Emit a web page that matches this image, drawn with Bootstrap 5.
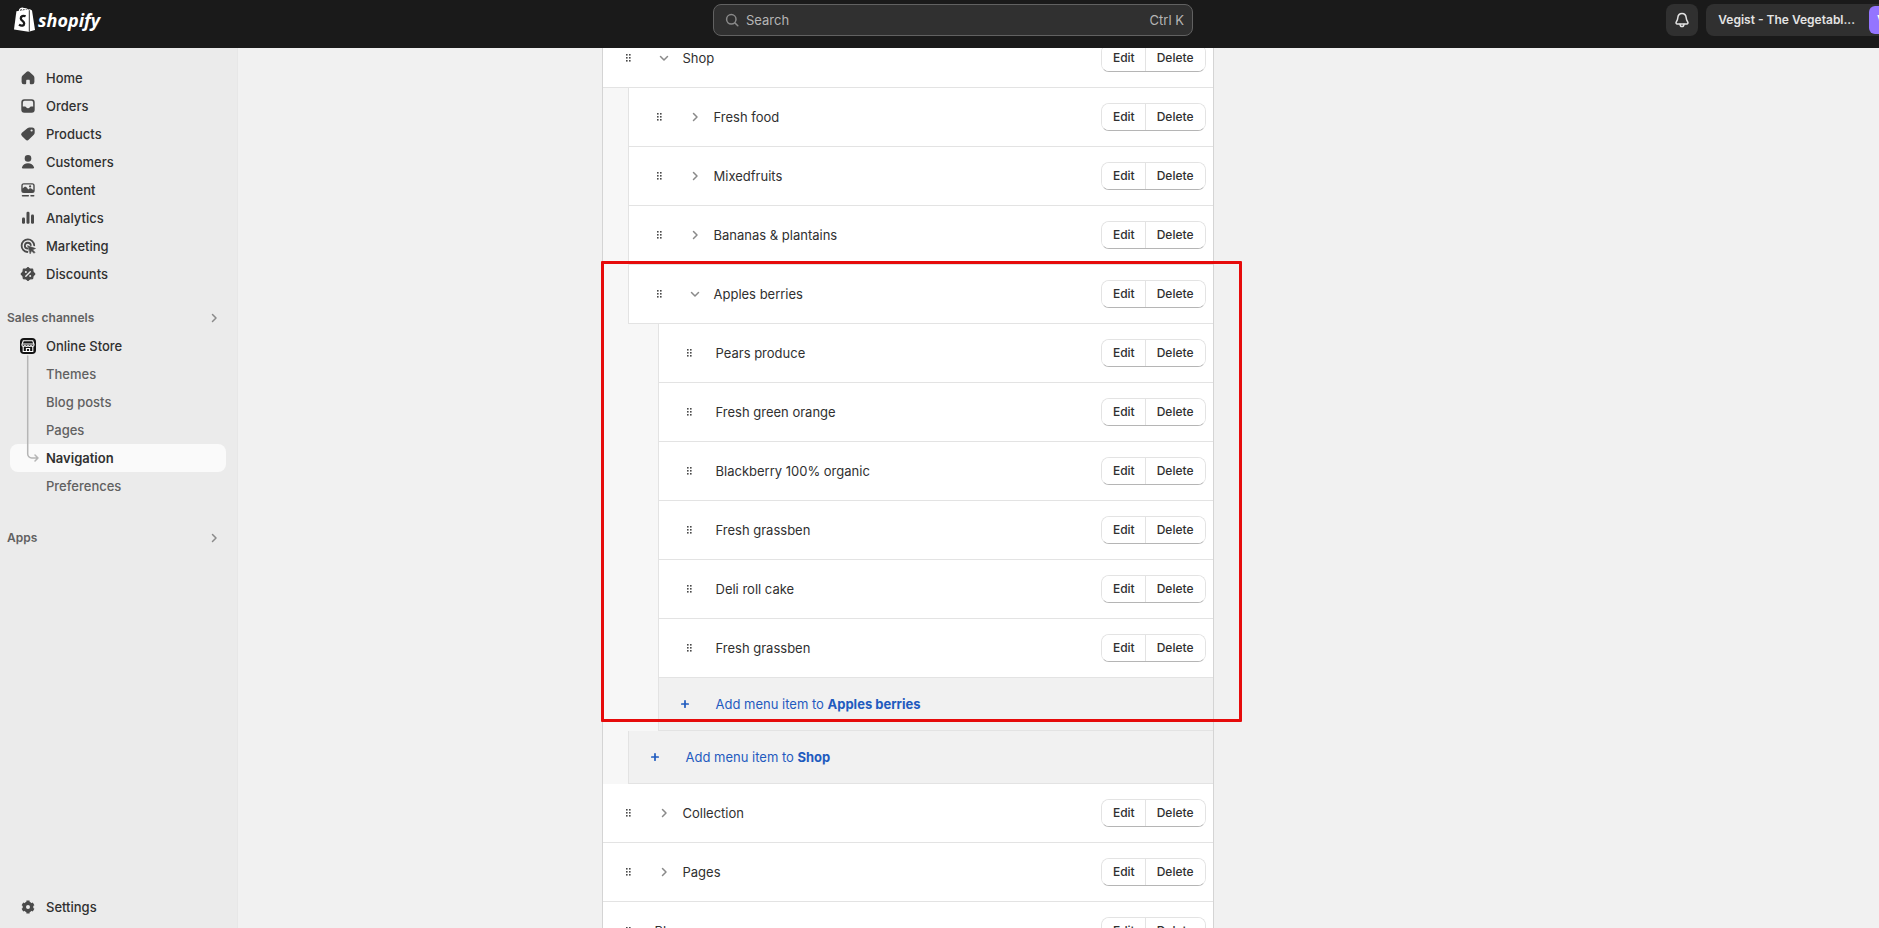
<!DOCTYPE html>
<html lang="en">
<head>
<meta charset="utf-8">
<meta name="viewport" content="width=device-width, initial-scale=1">
<title>Navigation</title>
<link href="https://cdn.jsdelivr.net/npm/bootstrap@5.3.0/dist/css/bootstrap.min.css" rel="stylesheet">
<style>
  body { font-family: Inter, "Liberation Sans", sans-serif; font-size: 13px; line-height: 20px; color: #303030; background: #f1f1f1; }
  svg { display: block; flex: none; }
  a { text-decoration: none; color: inherit; }

  /* top bar */
  .topbar { background: #1a1a1a; height: 48px; }
  .topbar-inner { margin-right: -27px; }
  .top-side { flex: 1 1 0; }
  .brand-mark { margin: 0 3px 0 14px; }
  .brand-word { font: italic 700 18px/32px "Open Sans", sans-serif; color: #fff; }
  .search-box { flex: 0 1 480px; height: 32px; background: #303030; border: 1px solid #616161; border-radius: 8px; color: #b5b5b5; }
  .search-box input { background: none; border: 0; outline: 0; color: inherit; min-width: 0; padding: 0; }
  .search-box input::placeholder { color: #b5b5b5; opacity: 1; }
  .top-btn { height: 32px; background: #303030; border: 0; border-radius: 8px; color: #e3e3e3; font-size: 12px; }
  .top-btn.bell { width: 32px; }
  .top-btn.account { margin-right: 7px; }
  .store-name { margin: 0 14px 0 12px; }
  .avatar { width: 28px; height: 28px; border-radius: 6px; background: #9474ff; color: #fff; margin-right: 2px; }

  /* sidebar */
  .shell { height: calc(100vh - 48px); }
  .side { width: 238px; background: #ebebeb; border-right: 1px solid #e7e7e7; padding: 16px 11px 7px 10px; }
  .side-link { height: 28px; padding: 0 8px; gap: 8px; border-radius: 8px; font-weight: 500; color: #303030; }
  .side-link svg { color: #4a4a4a; }
  .side-link.sub { padding-left: 36px; color: #616161; }
  .side-link.current { background: #fafafa; color: #303030; font-weight: 600; }
  .side-title { height: 28px; margin: 16px 0 0 -3px; padding-right: 6px; font-size: 12px; font-weight: 600; color: #616161; }
  .side-title svg { color: #8a8a8a; }
  .side-title.far { margin-top: 24px; }
  .branch { left: 15px; top: 16px; color: #b5b5b5; }

  /* menu tree */
  .page-col { max-width: 914px; }
  .menu-card { width: 612px; margin-top: -19px; background: #fff; border: 1px solid #d4d4d4; border-width: 0 1px; }
  .tree { list-style: none; margin: 0; padding: 0; }
  .tree .tree { background: #f7f7f7; padding-left: 25px; }
  .tree .tree .tree { padding-left: 30px; }
  .item { height: 59px; background: #fff; border-bottom: 1px solid #e3e3e3; padding: 0 7px 0 15px; gap: 16px; }
  .tree .tree .item { border-left: 1px solid #e3e3e3; padding-left: 20px; }
  .toggle { background: none; border: 0; padding: 0; color: #8a8a8a; margin-right: -8px; }
  .name { flex: 1; padding-left: 1px; }
  .pair { border: 1px solid #e3e3e3; border-bottom-color: #b5b5b5; border-radius: 8px; height: 28px; overflow: hidden; }
  .pair button { background: #fff; border: 0; padding: 0 10px 0 11px; font-size: 12px; line-height: 16px; font-weight: 500; color: #303030; }
  .pair button + button { border-left: 1px solid #e3e3e3; padding-right: 11px; }
  .add { height: 53px; background: #f1f1f1; border: 1px solid #e3e3e3; border-width: 0 0 1px 1px; padding-left: 16px; gap: 21px; color: #1f5bbf; }
  .add strong { font-weight: 650; }
  .marker { left: -2px; right: -29px; top: 232px; height: 461px; border: 3px solid #e60b0b; border-radius: 1px; pointer-events: none; }
</style>
</head>
<body class="overflow-hidden">

<svg width="0" height="0" class="position-absolute" aria-hidden="true">
  <symbol id="i-drag" viewBox="0 0 20 20"><g fill="#4a4a4a"><rect x="8" y="6" width="1.6" height="1.6"/><rect x="11" y="6" width="1.6" height="1.6"/><rect x="8" y="9" width="1.6" height="1.6"/><rect x="11" y="9" width="1.6" height="1.6"/><rect x="8" y="12" width="1.6" height="1.6"/><rect x="11" y="12" width="1.6" height="1.6"/></g></symbol>
  <symbol id="i-right" viewBox="0 0 20 20"><path d="M8.500 6.500 12 10l-3.500 3.500" fill="none" stroke="currentColor" stroke-width="1.500" stroke-linecap="round" stroke-linejoin="round"/></symbol>
  <symbol id="i-down" viewBox="0 0 20 20"><path d="M6.500 8.500 10 12l3.500-3.500" fill="none" stroke="currentColor" stroke-width="1.500" stroke-linecap="round" stroke-linejoin="round"/></symbol>
  <symbol id="i-plus" viewBox="0 0 20 20"><path d="M10 6.800v6.400M6.800 10h6.400" fill="none" stroke="currentColor" stroke-width="1.700" stroke-linecap="round"/></symbol>
</svg>

<header class="topbar overflow-hidden">
  <div class="topbar-inner d-flex pt-1">
    <div class="top-side">
      <a href="#" class="d-inline-flex align-items-start" aria-label="Shopify home">
        <svg class="brand-mark" width="21" height="32" viewBox="0 0 21 32">
          <path d="M2.400 7.300 16 5.300l2 1.100 3 19.700-6.400 1.700L0 25.400z" fill="#fff"/>
          <path d="M5.200 7C5.700 5 7.500 4 9.200 4.200c1.500.2 2.200 1.100 2.300 2M7.800 6.600C8 5.300 9.300 4.500 10.800 4.500c1.500 0 2.500.4 2.900 1.200" fill="none" stroke="#fff" stroke-width="1.100"/>
          <path d="M15.300 6.200v21.400" stroke="#1a1a1a" stroke-width=".9"/>
          <path d="M11.600 12.300c-2.400-1.100-4.900 0-4.800 2.200.1 2.300 3.500 2.600 3.400 5 0 2.100-2.600 2.900-5.200 1.100" fill="none" stroke="#1a1a1a" stroke-width="2.300"/>
        </svg>
        <span class="brand-word">shopify</span>
      </a>
    </div>
    <label class="search-box d-flex align-items-center px-2">
      <svg width="20" height="20" viewBox="0 0 20 20" fill="none" stroke="#8a8a8a" stroke-width="1.500" stroke-linecap="round"><circle cx="9.300" cy="9.300" r="4.700"/><path d="m13 13 2.800 2.800"/></svg>
      <input class="flex-fill ms-1" type="text" placeholder="Search" aria-label="Search">
      <span>Ctrl K</span>
    </label>
    <div class="top-side d-flex justify-content-end gap-2">
      <button class="top-btn bell d-flex align-items-center justify-content-center p-0" aria-label="Notifications">
        <svg width="20" height="20" viewBox="0 0 20 20" fill="none" stroke="currentColor" stroke-width="1.500" stroke-linecap="round" stroke-linejoin="round"><path d="M10 3.500c-2.600 0-4 1.900-4.200 4.300-.1 1.900-.5 2.700-1.400 3.900-.8 1.100-.3 2.300.9 2.300h9.400c1.200 0 1.700-1.200.9-2.300-.9-1.200-1.300-2-1.400-3.900C14 5.400 12.600 3.500 10 3.500z"/><path d="M8 14.300c.2 1.400.9 2.200 2 2.200s1.800-.8 2-2.200"/></svg>
      </button>
      <button class="top-btn account d-flex align-items-center p-0 fw-semibold text-nowrap" aria-label="Store account">
        <span class="store-name">Vegist - The Vegetabl...</span>
        <span class="avatar d-flex align-items-center ps-2">V</span>
      </button>
    </div>
  </div>
</header>

<div class="shell d-flex">
  <nav class="side d-flex flex-column flex-shrink-0" aria-label="Main">
    <a href="#" class="side-link d-flex align-items-center"><svg width="20" height="20" viewBox="0 0 20 20" fill="currentColor"><path d="M11.300 3.800a2 2 0 0 0-2.600 0L4.600 7.500A3 3 0 0 0 3.600 9.700V14a2.200 2.200 0 0 0 2.200 2.200h1.500c.6 0 .9-.4.900-.9v-2.500c0-.7.400-1.100 1-1.100h1.600c.6 0 1 .4 1 1.100v2.500c0 .5.400.9.900.900h1.500A2.200 2.200 0 0 0 16.400 14V9.700a3 3 0 0 0-1-2.200z"/></svg>Home</a>
    <a href="#" class="side-link d-flex align-items-center"><svg width="20" height="20" viewBox="0 0 20 20"><path fill="currentColor" fill-rule="evenodd" d="M6.300 3.300h7.400a3 3 0 0 1 3 3v7.400a3 3 0 0 1-3 3H6.300a3 3 0 0 1-3-3V6.300a3 3 0 0 1 3-3zm.2 1.500a1.600 1.600 0 0 0-1.600 1.600l-.1 4.100H7c.6 0 .9.300 1.200.8.300.6.900 1 1.800 1s1.500-.4 1.800-1c.3-.5.600-.8 1.200-.8h2.200l-.1-4.100a1.600 1.600 0 0 0-1.600-1.600z"/></svg>Orders</a>
    <a href="#" class="side-link d-flex align-items-center"><svg width="20" height="20" viewBox="0 0 20 20"><path fill="currentColor" fill-rule="evenodd" d="M11.600 3.400h2.500a2.600 2.600 0 0 1 2.600 2.600v2.600c0 .8-.3 1.500-.9 2.100l-4.900 4.900a2.400 2.400 0 0 1-3.400 0L3.900 12a2.200 2.200 0 0 1 0-3.200l5.500-4.500c.6-.6 1.400-.9 2.200-.9zm2 4.200a1.100 1.100 0 1 0 0-2.200 1.100 1.100 0 0 0 0 2.200z"/></svg>Products</a>
    <a href="#" class="side-link d-flex align-items-center"><svg width="20" height="20" viewBox="0 0 20 20" fill="currentColor"><circle cx="10" cy="6.400" r="3.300"/><path d="M4 15.200c.9-2.500 3.200-4 6-4s5.100 1.500 6 4c.3.700-.1 1.200-.8 1.200H4.800c-.7 0-1.100-.5-.8-1.200z"/></svg>Customers</a>
    <a href="#" class="side-link d-flex align-items-center"><svg width="20" height="20" viewBox="0 0 20 20"><path fill="currentColor" fill-rule="evenodd" d="M5.800 3.200h8.400a2.500 2.500 0 0 1 2.500 2.500v4.800a2.500 2.500 0 0 1-2.500 2.500H5.800a2.500 2.500 0 0 1-2.500-2.500V5.700a2.500 2.500 0 0 1 2.500-2.500zm0 1.400c-.6 0-1.100.5-1.100 1.100v2.900l1.600-1.500c.6-.5 1.300-.5 1.900 0l2.200 2.300 1-.9c.5-.5 1.300-.5 1.800 0l2.100 1.400V5.700c0-.6-.5-1.100-1.100-1.100zm6.300 2.900a1.100 1.100 0 1 0 0-2.200 1.100 1.100 0 0 0 0 2.200z"/><path d="M4.500 15.700h5.800M13 15.700h2.700" stroke="currentColor" stroke-width="1.500" stroke-linecap="round"/></svg>Content</a>
    <a href="#" class="side-link d-flex align-items-center"><svg width="20" height="20" viewBox="0 0 20 20" fill="currentColor"><rect x="4" y="9.500" width="3" height="6.300" rx="1.200"/><rect x="8.500" y="3.800" width="3" height="12" rx="1.200"/><rect x="13" y="6.500" width="3" height="9.300" rx="1.200"/></svg>Analytics</a>
    <a href="#" class="side-link d-flex align-items-center"><svg width="20" height="20" viewBox="0 0 20 20" fill="none" stroke="currentColor" stroke-width="1.800" stroke-linecap="round"><path d="M16.200 9.300A6.300 6.300 0 1 0 9.400 16M12.800 9.200A3 3 0 1 0 9.300 12.700"/><path d="m9.800 9.800 7.700 2.700-3 1.300 2.500 2.500-1 1-2.500-2.500-1.200 2.800z" fill="currentColor" stroke-width=".6" stroke-linejoin="round"/></svg>Marketing</a>
    <a href="#" class="side-link d-flex align-items-center"><svg width="20" height="20" viewBox="0 0 20 20"><path d="m10 3.500 1.900 1.600 2.700-.1.400 2.800L16.800 10 15 12.200l-.4 2.500-2.700.2L10 16.500l-1.900-1.600-2.700-.2-.4-2.500L3.200 10 5 7.800 5.400 5l2.700.1z" fill="currentColor" stroke="currentColor" stroke-width="1.200" stroke-linejoin="round"/><path d="m7.800 12.300 4.500-4.600" stroke="#ebebeb" stroke-width="1.400" stroke-linecap="round"/><circle cx="7.900" cy="8" r="1" fill="#ebebeb"/><circle cx="12.200" cy="12" r="1" fill="#ebebeb"/></svg>Discounts</a>

    <a href="#" class="side-title d-flex align-items-center justify-content-between">Sales channels <svg width="12" height="20" viewBox="4 0 12 20"><use href="#i-right" width="20" height="20"/></svg></a>
    <div class="position-relative">
      <a href="#" class="side-link d-flex align-items-center"><svg width="20" height="20" viewBox="0 0 20 20"><rect x="2" y="2" width="16" height="16" rx="4" fill="#141414"/><g fill="none" stroke="#fff" stroke-width="1.100"><path d="M5.300 4.800h9.400L16 8.300v.6a1.500 1.500 0 0 1-3 0 1.500 1.500 0 0 1-3 0 1.500 1.500 0 0 1-3 0 1.500 1.500 0 0 1-3 0v-.6z"/><path d="M4.300 8h11.400M5.200 10.800v4.700h9.600v-4.700M8.400 15.500v-3h3.200v3"/></g></svg>Online Store</a>
      <a href="#" class="side-link sub d-flex align-items-center">Themes</a>
      <a href="#" class="side-link sub d-flex align-items-center">Blog posts</a>
      <a href="#" class="side-link sub d-flex align-items-center">Pages</a>
      <a href="#" class="side-link sub current d-flex align-items-center" aria-current="page">Navigation</a>
      <a href="#" class="side-link sub d-flex align-items-center">Preferences</a>
      <svg class="branch position-absolute" width="16" height="124" viewBox="0 0 16 124" fill="none" stroke="currentColor" stroke-width="1.500" stroke-linecap="round" stroke-linejoin="round"><path d="M2.700 8v98a4 4 0 0 0 4 4H13M10 107l3 3-3 3"/></svg>
    </div>
    <a href="#" class="side-title far d-flex align-items-center justify-content-between">Apps <svg width="12" height="20" viewBox="4 0 12 20"><use href="#i-right" width="20" height="20"/></svg></a>
    <a href="#" class="side-link d-flex align-items-center mt-auto"><svg width="20" height="20" viewBox="0 0 20 20" fill="none" stroke="currentColor"><circle cx="10" cy="10" r="3.700" stroke-width="3.400"/><path d="M10 3.500v2M10 14.500v2M4.400 6.800l1.700 1M13.900 12.200l1.700 1M4.400 13.200l1.700-1M13.900 7.800l1.700-1" stroke-width="3.200" stroke-linejoin="round"/></svg>Settings</a>
  </nav>

  <main class="flex-fill overflow-hidden">
    <div class="page-col mx-auto">
      <div class="menu-card position-relative">
        <ul class="tree">
          <li>
            <div class="item d-flex align-items-center"><svg width="20" height="20"><use href="#i-drag"/></svg><button class="toggle" aria-label="Collapse Shop"><svg width="20" height="20"><use href="#i-down"/></svg></button><span class="name">Shop</span><div class="pair d-flex"><button>Edit</button><button>Delete</button></div></div>
            <ul class="tree">
              <li><div class="item d-flex align-items-center"><svg width="20" height="20"><use href="#i-drag"/></svg><button class="toggle" aria-label="Expand Fresh food"><svg width="20" height="20"><use href="#i-right"/></svg></button><span class="name">Fresh food</span><div class="pair d-flex"><button>Edit</button><button>Delete</button></div></div></li>
              <li><div class="item d-flex align-items-center"><svg width="20" height="20"><use href="#i-drag"/></svg><button class="toggle" aria-label="Expand Mixedfruits"><svg width="20" height="20"><use href="#i-right"/></svg></button><span class="name">Mixedfruits</span><div class="pair d-flex"><button>Edit</button><button>Delete</button></div></div></li>
              <li><div class="item d-flex align-items-center"><svg width="20" height="20"><use href="#i-drag"/></svg><button class="toggle" aria-label="Expand Bananas &amp; plantains"><svg width="20" height="20"><use href="#i-right"/></svg></button><span class="name">Bananas &amp; plantains</span><div class="pair d-flex"><button>Edit</button><button>Delete</button></div></div></li>
              <li>
                <div class="item d-flex align-items-center"><svg width="20" height="20"><use href="#i-drag"/></svg><button class="toggle" aria-label="Collapse Apples berries"><svg width="20" height="20"><use href="#i-down"/></svg></button><span class="name">Apples berries</span><div class="pair d-flex"><button>Edit</button><button>Delete</button></div></div>
                <ul class="tree">
                  <li><div class="item d-flex align-items-center"><svg width="20" height="20"><use href="#i-drag"/></svg><span class="name">Pears produce</span><div class="pair d-flex"><button>Edit</button><button>Delete</button></div></div></li>
                  <li><div class="item d-flex align-items-center"><svg width="20" height="20"><use href="#i-drag"/></svg><span class="name">Fresh green orange</span><div class="pair d-flex"><button>Edit</button><button>Delete</button></div></div></li>
                  <li><div class="item d-flex align-items-center"><svg width="20" height="20"><use href="#i-drag"/></svg><span class="name">Blackberry 100% organic</span><div class="pair d-flex"><button>Edit</button><button>Delete</button></div></div></li>
                  <li><div class="item d-flex align-items-center"><svg width="20" height="20"><use href="#i-drag"/></svg><span class="name">Fresh grassben</span><div class="pair d-flex"><button>Edit</button><button>Delete</button></div></div></li>
                  <li><div class="item d-flex align-items-center"><svg width="20" height="20"><use href="#i-drag"/></svg><span class="name">Deli roll cake</span><div class="pair d-flex"><button>Edit</button><button>Delete</button></div></div></li>
                  <li><div class="item d-flex align-items-center"><svg width="20" height="20"><use href="#i-drag"/></svg><span class="name">Fresh grassben</span><div class="pair d-flex"><button>Edit</button><button>Delete</button></div></div></li>
                  <li><a href="#" class="add d-flex align-items-center"><svg width="20" height="20"><use href="#i-plus"/></svg><span>Add menu item to <strong>Apples berries</strong></span></a></li>
                </ul>
              </li>
              <li><a href="#" class="add d-flex align-items-center"><svg width="20" height="20"><use href="#i-plus"/></svg><span>Add menu item to <strong>Shop</strong></span></a></li>
            </ul>
          </li>
          <li><div class="item d-flex align-items-center"><svg width="20" height="20"><use href="#i-drag"/></svg><button class="toggle" aria-label="Expand Collection"><svg width="20" height="20"><use href="#i-right"/></svg></button><span class="name">Collection</span><div class="pair d-flex"><button>Edit</button><button>Delete</button></div></div></li>
          <li><div class="item d-flex align-items-center"><svg width="20" height="20"><use href="#i-drag"/></svg><button class="toggle" aria-label="Expand Pages"><svg width="20" height="20"><use href="#i-right"/></svg></button><span class="name">Pages</span><div class="pair d-flex"><button>Edit</button><button>Delete</button></div></div></li>
          <li><div class="item d-flex align-items-center"><svg width="20" height="20"><use href="#i-drag"/></svg><span class="name">Blog</span><div class="pair d-flex"><button>Edit</button><button>Delete</button></div></div></li>
        </ul>
        <div class="marker position-absolute"></div>
      </div>
    </div>
  </main>
</div>

<script src="https://cdn.jsdelivr.net/npm/bootstrap@5.3.0/dist/js/bootstrap.bundle.min.js"></script>
</body>
</html>
